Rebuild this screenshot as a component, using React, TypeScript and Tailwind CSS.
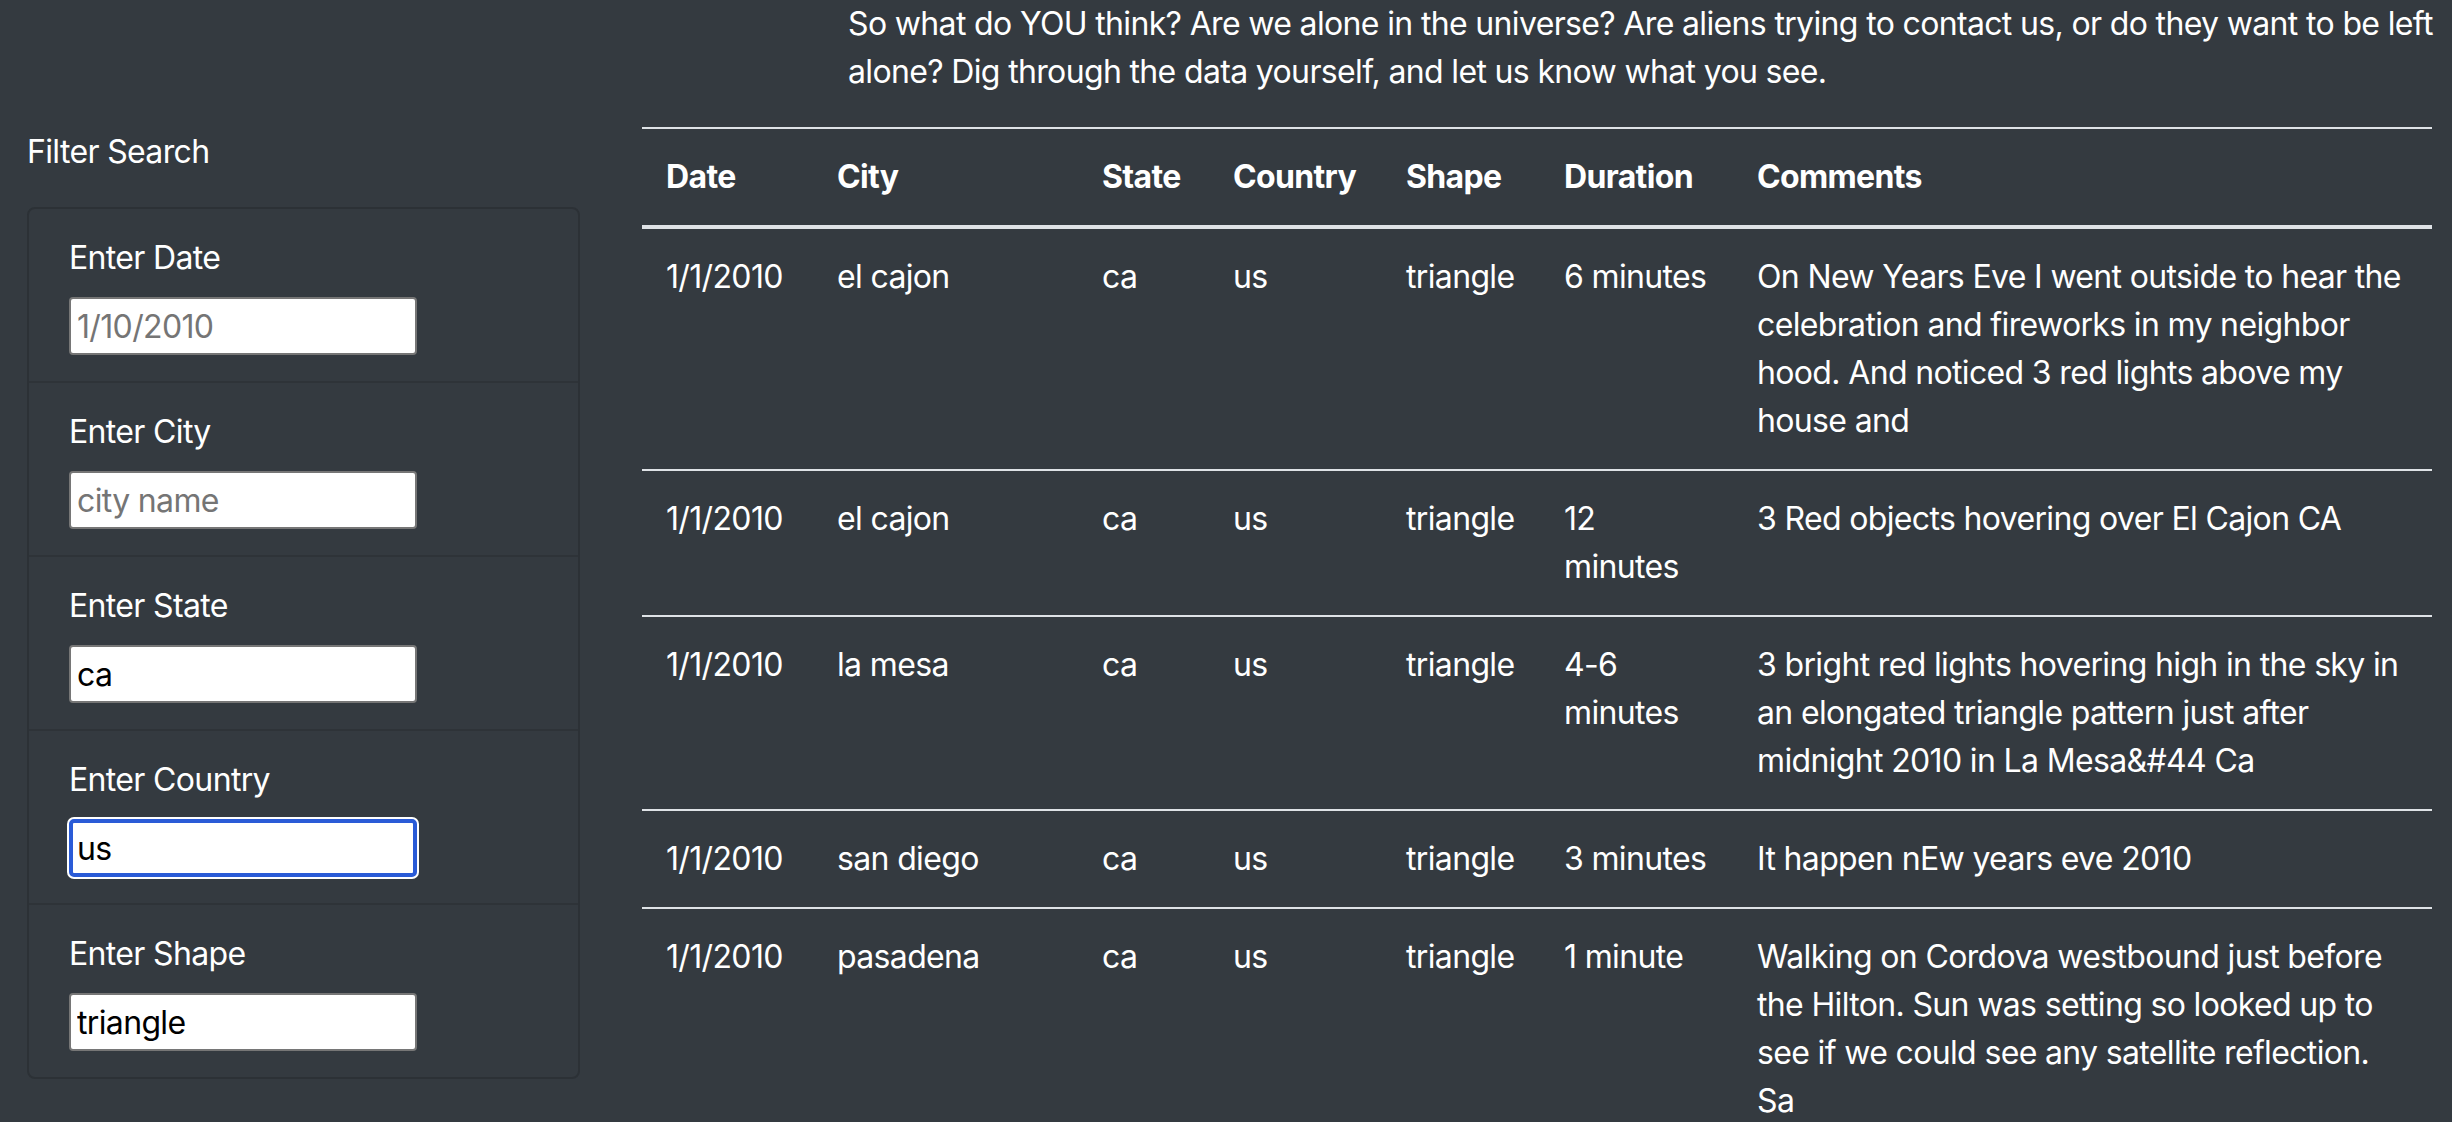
import React from 'react';

type Sighting = {
  date: string;
  city: string;
  state: string;
  country: string;
  shape: string;
  duration: string[];
  comments: string[];
};

// lines are kept as they wrap on the original page
const sightings: Sighting[] = [
  {
    date: '1/1/2010',
    city: 'el cajon',
    state: 'ca',
    country: 'us',
    shape: 'triangle',
    duration: ['6 minutes'],
    comments: [
      'On New Years Eve I went outside to hear the',
      'celebration and fireworks in my neighbor',
      'hood. And noticed 3 red lights above my',
      'house and',
    ],
  },
  {
    date: '1/1/2010',
    city: 'el cajon',
    state: 'ca',
    country: 'us',
    shape: 'triangle',
    duration: ['12', 'minutes'],
    comments: ['3 Red objects hovering over El Cajon CA'],
  },
  {
    date: '1/1/2010',
    city: 'la mesa',
    state: 'ca',
    country: 'us',
    shape: 'triangle',
    duration: ['4-6', 'minutes'],
    comments: [
      '3 bright red lights hovering high in the sky in',
      'an elongated triangle pattern just after',
      'midnight 2010 in La Mesa&#44 Ca',
    ],
  },
  {
    date: '1/1/2010',
    city: 'san diego',
    state: 'ca',
    country: 'us',
    shape: 'triangle',
    duration: ['3 minutes'],
    comments: ['It happen nEw years eve 2010'],
  },
  {
    date: '1/1/2010',
    city: 'pasadena',
    state: 'ca',
    country: 'us',
    shape: 'triangle',
    duration: ['1 minute'],
    comments: [
      'Walking on Cordova westbound just before',
      'the Hilton. Sun was setting so looked up to',
      'see if we could see any satellite reflection.',
      'Sa',
    ],
  },
];

const filters = [
  { id: 'datetime', label: 'Enter Date', placeholder: '1/10/2010', value: '' },
  { id: 'city', label: 'Enter City', placeholder: 'city name', value: '' },
  { id: 'state', label: 'Enter State', placeholder: 'state', value: 'ca' },
  { id: 'country', label: 'Enter Country', placeholder: 'country', value: 'us', focused: true },
  { id: 'shape', label: 'Enter Shape', placeholder: 'shape', value: 'triangle' },
];

const headers = ['Date', 'City', 'State', 'Country', 'Shape', 'Duration', 'Comments'];

const Lines: React.FC<{ lines: string[] }> = ({ lines }) => (
  <>
    {lines.map((l, i) => (
      <span key={i} className="block whitespace-nowrap">
        {l}
      </span>
    ))}
  </>
);

const FilterPanel: React.FC = () => (
  <aside className="w-[642px] shrink-0 pl-[27px] pt-[128px]">
    <div className="leading-[48px]">Filter Search</div>
    <ul className="mt-[31px] w-[553px] rounded-[8px] border-2 border-[#2c3136]">
      {filters.map((f, i) => (
        <li
          key={f.id}
          className={`px-[40px] pt-[25px] pb-[26px] ${i > 0 ? 'border-t-2 border-[#2e3338]' : ''}`}
        >
          <label htmlFor={f.id} className="block leading-[48px]">
            {f.label}
          </label>
          <input
            id={f.id}
            type="text"
            placeholder={f.placeholder}
            defaultValue={f.value}
            className={
              f.focused
                ? 'mt-[15px] block h-[58px] w-[348px] rounded-[5px] border-[4px] border-[#2a5bd7] bg-white px-[4px] text-[32px] text-black outline-none ring-2 ring-white placeholder:text-[#757575]'
                : 'mt-[15px] block h-[58px] w-[348px] rounded-[4px] border-2 border-[#767676] bg-white px-[6px] text-[32px] text-black outline-none placeholder:text-[#757575]'
            }
          />
        </li>
      ))}
    </ul>
  </aside>
);

const SightingsTable: React.FC = () => (
  <table className="w-[1790px] table-fixed border-collapse text-left">
    <colgroup>
      <col className="w-[171px]" />
      <col className="w-[265px]" />
      <col className="w-[131px]" />
      <col className="w-[173px]" />
      <col className="w-[158px]" />
      <col className="w-[193px]" />
      <col className="w-[699px]" />
    </colgroup>
    <thead>
      <tr>
        {headers.map((h) => (
          <th
            key={h}
            className="border-t-2 border-b-4 border-[#dee2e6] p-[24px] align-bottom font-bold"
          >
            {h}
          </th>
        ))}
      </tr>
    </thead>
    <tbody>
      {sightings.map((s, i) => (
        <tr key={i}>
          {[s.date, s.city, s.state, s.country, s.shape].map((v, j) => (
            <td key={j} className="whitespace-nowrap border-t-2 border-[#dee2e6] p-[24px] align-top">
              {v}
            </td>
          ))}
          <td className="border-t-2 border-[#dee2e6] p-[24px] align-top">
            <Lines lines={s.duration} />
          </td>
          <td className="border-t-2 border-[#dee2e6] p-[24px] align-top">
            <Lines lines={s.comments} />
          </td>
        </tr>
      ))}
    </tbody>
  </table>
);

export default function App() {
  return (
    <div className="h-[1122px] overflow-hidden bg-[#343a40] font-['Inter','Noto_Sans',sans-serif] text-[32px] leading-[48px] tracking-[-0.65px] text-white">
      <div className="flex">
        <FilterPanel />
        <main className="w-[1790px] shrink-0">
          <p className="ml-[206px] w-[1604px]">
            <span className="block whitespace-nowrap">
              So what do YOU think? Are we alone in the universe? Are aliens trying to contact us, or do they want to be left
            </span>
            <span className="block whitespace-nowrap">
              alone? Dig through the data yourself, and let us know what you see.
            </span>
          </p>
          <div className="mt-[31px]">
            <SightingsTable />
          </div>
        </main>
      </div>
    </div>
  );
}
